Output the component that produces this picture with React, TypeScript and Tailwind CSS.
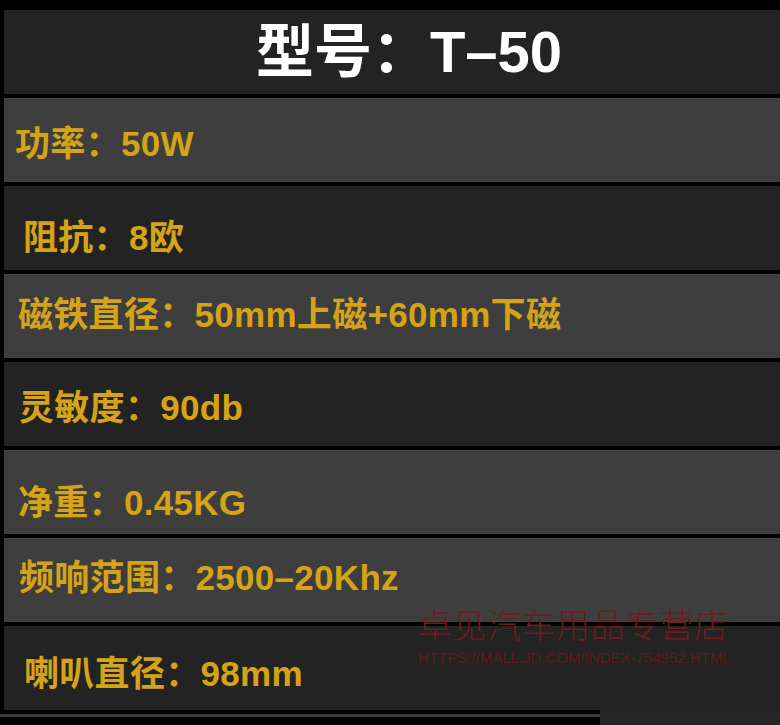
import React from "react";

type Spec = {
  label: string;
  tone: "dark" | "light";
  pad: string;
};

const specs: Spec[] = [
  { label: "功率：50W", tone: "light", pad: "pl-[11px] pt-[6px]" },
  { label: "阻抗：8欧", tone: "dark", pad: "pl-[19px] pt-[18px]" },
  { label: "磁铁直径：50mm上磁+60mm下磁", tone: "light", pad: "pl-[14px] pb-[4px]" },
  { label: "灵敏度：90db", tone: "dark", pad: "pl-[15px] pt-[6px]" },
  { label: "净重：0.45KG", tone: "light", pad: "pl-[14px] pt-[20px]" },
  { label: "频响范围：2500–20Khz", tone: "light", pad: "pl-[15px] pb-[6px]" },
  { label: "喇叭直径：98mm", tone: "dark", pad: "pl-[20px] pt-[10px]" },
];

function SpecRow({ spec }: { spec: Spec }) {
  return (
    <div
      className={
        spec.tone === "light"
          ? "h-[84px] flex items-center bg-[#3e3e3e] border-t border-[#474747] " + spec.pad
          : "h-[84px] flex items-center bg-[#232323] " + spec.pad
      }
    >
      <span className="text-[35px] leading-none font-bold text-[#d4a317] whitespace-nowrap tracking-[0.3px]">
        {spec.label}
      </span>
    </div>
  );
}

export default function App() {
  return (
    <div
      className="relative w-[780px] h-[725px] overflow-hidden bg-black"
      style={{ fontFamily: '"Liberation Sans", "Noto Sans CJK SC", sans-serif' }}
    >
      <div className="flex flex-col gap-[4px] pt-[10px] pl-[4px]">
        <div className="h-[84px] flex items-center justify-center pl-[34px] bg-[#232323]">
          <span className="text-[58px] leading-none font-bold text-white whitespace-nowrap">
            型号：T–50
          </span>
        </div>
        {specs.map((s) => (
          <SpecRow key={s.label} spec={s} />
        ))}
      </div>

      <div className="flex h-[15px]">
        <div className="w-[600px] flex flex-col">
          <div className="h-[4px] bg-black" />
          <div className="h-[3px] bg-[#3a3a3a]" />
          <div className="flex-1 bg-black" />
        </div>
        <div className="flex-1 bg-[#252525]" />
      </div>

      {/* store watermark */}
      <div className="absolute left-[418px] top-[609px] flex flex-col items-start gap-[12px] pointer-events-none">
        <span
          className="text-[34px] leading-[30px] font-light text-[#6e1c1c] whitespace-nowrap tracking-[0.5px]"
          style={{ fontFamily: '"Noto Sans CJK SC", sans-serif' }}
        >
          卓见汽车用品专营店
        </span>
        <span className="text-[15px] leading-[13px] text-[#5e1a1a] whitespace-nowrap">
          HTTPS://MALL.JD.COM/INDEX-754952.HTML
        </span>
      </div>
    </div>
  );
}
